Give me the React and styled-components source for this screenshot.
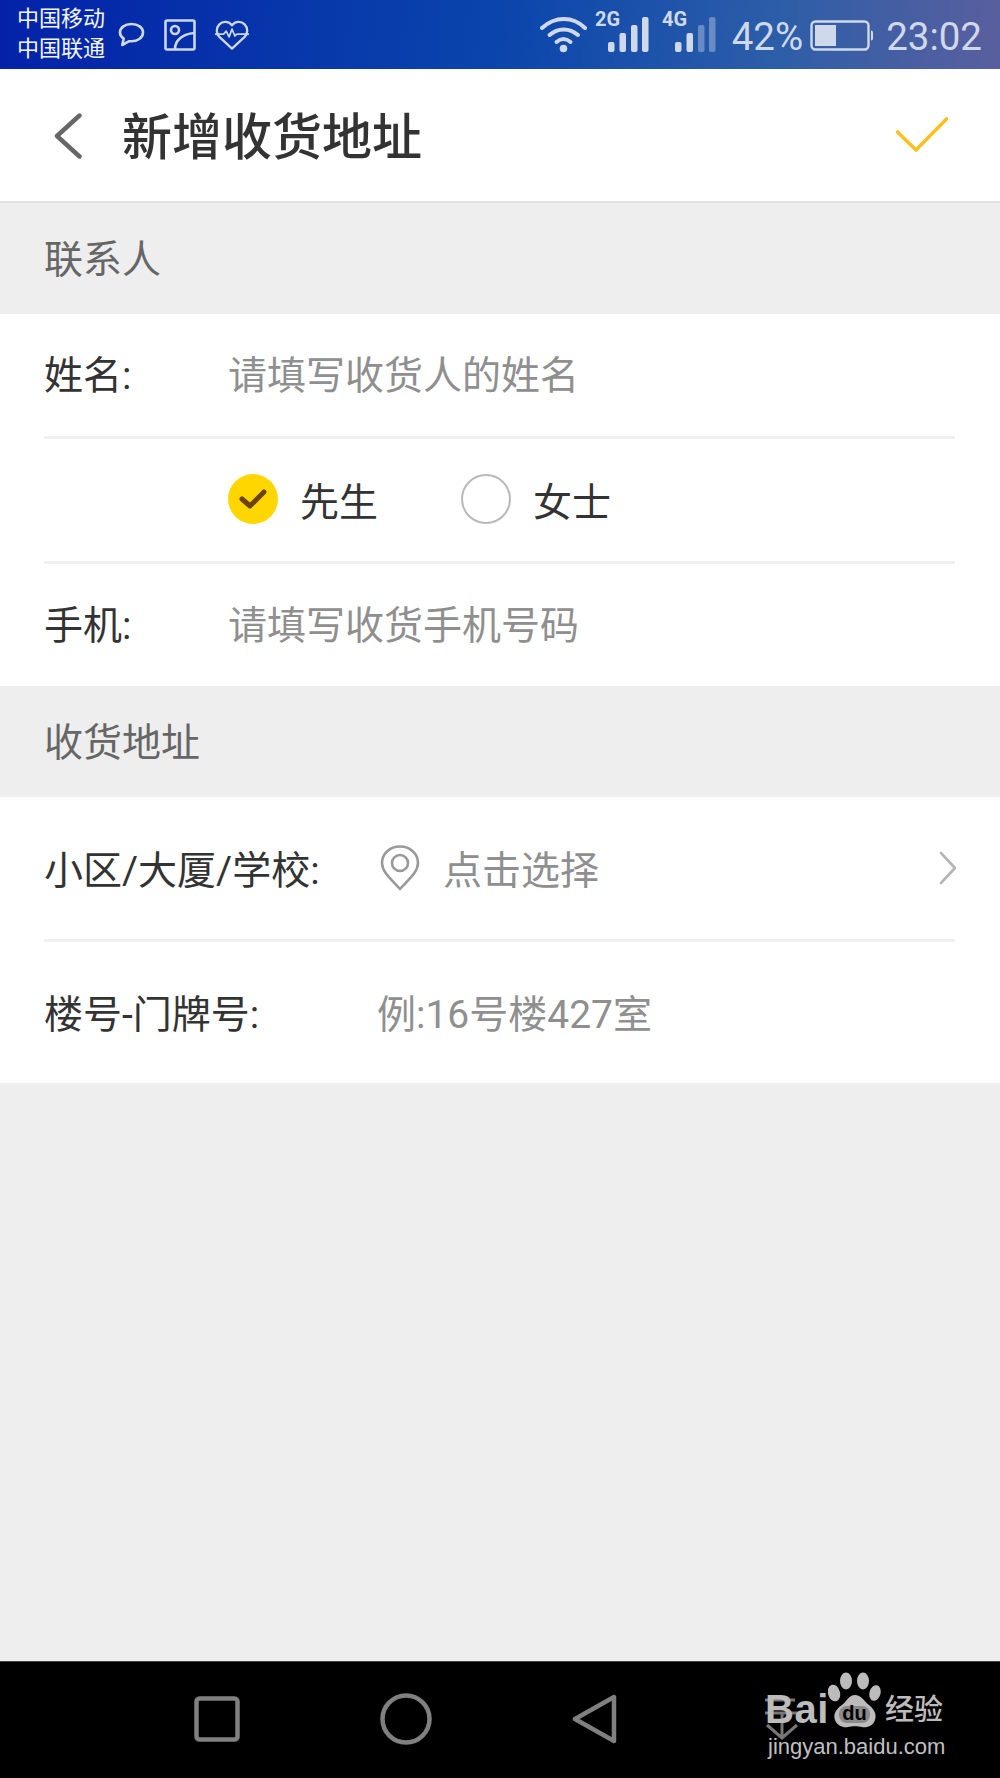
import React from 'react';
import styled, { createGlobalStyle } from 'styled-components';

const GlobalStyle = createGlobalStyle`
  html, body {
    margin: 0;
    padding: 0;
    background: #eeeeee;
  }
  * {
    box-sizing: border-box;
  }
`;

const FONT = 'Roboto, "Noto Sans CJK SC", sans-serif';

const Page = styled.div`
  width: 1000px;
  height: 1778px;
  display: flex;
  flex-direction: column;
  position: relative;
  overflow: hidden;
  font-family: ${FONT};
  background: #eeeeee;
`;

// status bar
const StatusBar = styled.div`
  height: 69px;
  flex: none;
  display: flex;
  align-items: center;
  padding: 0 18px 0 17px;
  background: linear-gradient(95deg, #0322a8 0%, #0a45ac 50%, #2d5ea8 78%, #5a5f9e 100%);
  color: #d0d9ea;
`;

const Carriers = styled.div`
  width: 101px;
  font-size: 22px;
  line-height: 30px;
  color: #f2f5fb;
  margin-top: -2px;
`;

const StatusIcons = styled.div`
  display: flex;
  align-items: center;
  gap: 19px;
  margin-top: 1px;
`;

const StatusRight = styled.div`
  margin-left: auto;
  display: flex;
  align-items: center;
`;

const SignalWrap = styled.div`
  width: ${(p) => p.$width}px;
  height: 69px;
`;

const StatusText = styled.span`
  font-size: 38.5px;
  line-height: 69px;
  margin-top: 4px;
  color: #d0d9ea;
`;

const Battery = styled.svg`
  margin: 2px 12px 0 7px;
`;

// header
const Header = styled.header`
  height: 134px;
  flex: none;
  display: flex;
  align-items: center;
  padding: 0 52px 0 54px;
  background: #ffffff;
  border-bottom: 2px solid #e2e2e2;
`;

const BackIcon = styled.svg`
  margin-top: 2px;
`;

const Title = styled.h1`
  margin: 0 0 4px 40px;
  font-size: 50px;
  font-weight: 500;
  color: #333333;
`;

const Confirm = styled.svg`
  margin-left: auto;
`;

// form
const SectionLabel = styled.div`
  height: 111px;
  flex: none;
  display: flex;
  align-items: center;
  padding: 0 44px 5px;
  font-size: 39px;
  color: #666666;
`;

const Panel = styled.section`
  background: #ffffff;
  padding: 0 45px 0 44px;
  flex: none;
`;

const Row = styled.div`
  height: ${(p) => p.$height}px;
  display: flex;
  align-items: center;
  font-size: 39px;
  border-bottom: ${(p) => (p.$last ? 'none' : '3px solid #f0f0f0')};
`;

const Label = styled.span`
  flex: none;
  width: ${(p) => p.$width}px;
  margin-bottom: ${(p) => p.$lift ?? 7}px;
  color: #333333;
`;

const Placeholder = styled.span`
  margin-bottom: ${(p) => p.$lift ?? 7}px;
  color: #8f8f8f;
`;

const Radio = styled.span`
  width: 50px;
  height: 50px;
  flex: none;
  margin-bottom: 2px;
  border-radius: 50%;
  display: flex;
  align-items: center;
  justify-content: center;
  background: ${(p) => (p.$checked ? '#ffd600' : '#ffffff')};
  border: ${(p) => (p.$checked ? 'none' : '2px solid #b9b9b9')};
`;

const GenderOption = styled.div`
  display: flex;
  align-items: center;
  gap: 22px;
  width: 233px;
  color: #333333;
`;

const GenderText = styled.span`
  margin-bottom: 3px;
`;

const PinIcon = styled.svg`
  flex: none;
  margin-right: 23px;
  margin-left: 3px;
`;

const Chevron = styled.svg`
  margin-left: auto;
  margin-right: -2px;
`;

const Filler = styled.div`
  flex: 1;
`;

// bottom nav
const NavBar = styled.nav`
  height: 117px;
  flex: none;
  background: #000000;
  border-top: 1px solid #444444;
  display: flex;
  align-items: center;
  padding: 0 0 3px 194px;
`;

const NavSlot = styled.div`
  display: flex;
  align-items: center;
  margin-left: ${(p) => p.$gap}px;
`;

// watermark lies over the nav bar
const Watermark = styled.div`
  position: absolute;
  left: 765px;
  top: 1672px;
  width: 182px;
  height: 86px;
  color: #bcbcbc;
  font-family: "Liberation Sans", "Noto Sans CJK SC", sans-serif;
`;

const WatermarkTop = styled.div`
  display: flex;
  align-items: flex-end;
  height: 56px;
`;

const Bai = styled.span`
  width: 63px;
  font-size: 40px;
  font-weight: 700;
  line-height: 38px;
  letter-spacing: 0.5px;
`;

const Jing = styled.span`
  font-size: 29px;
  font-weight: 500;
  line-height: 36px;
  margin-left: 3px;
  white-space: nowrap;
`;

const WatermarkUrl = styled.div`
  font-size: 22px;
  line-height: 24px;
  margin: 7px 0 0 3px;
  white-space: nowrap;
  color: #c0c0c0;
`;

const Bars = ({ x, faded }) => {
  const offsets = [0, 11.5, 23, 34];
  const heights = [10, 19, 27, 35];
  return (
    <>
      {offsets.map((o, i) => (
        <rect
          key={i}
          x={x + o}
          y={52 - heights[i]}
          width="6.5"
          height={heights[i]}
          rx="2"
          fill="#d0d9ea"
          opacity={faded && i > 1 ? 0.4 : 1}
        />
      ))}
    </>
  );
};

function App() {
  return (
    <Page>
      <GlobalStyle />
      <StatusBar>
        <Carriers>
          中国移动
          <br />
          中国联通
        </Carriers>
        <StatusIcons>
          <svg width="27" height="26" viewBox="0 0 27 26" fill="none" stroke="#d0d9ea" strokeWidth="2.6" strokeLinejoin="round">
            <path d="M13.5 2C7 2 2 5.6 2 10.5c0 2.8 1.500 4.800 3.700 6.200L4.200 23l7-3.800c.8.100 1.500.1 2.300.1 6.500 0 11.500-3.800 11.500-8.800S20 2 13.500 2z" />
          </svg>
          <svg width="32" height="32" viewBox="0 0 32 32" fill="none" stroke="#cdd6ea" strokeWidth="2.6">
            <rect x="1.500" y="1.500" width="29" height="29" rx="1.500" />
            <circle cx="11" cy="11" r="4" />
            <path d="M11 30c0-9 8-15 19-16" />
          </svg>
          <svg width="34" height="32" viewBox="0 0 35 32" fill="none" stroke="#cdd6ea" strokeWidth="2.4" strokeLinejoin="round">
            <path d="M17.500 30L4.500 18C1 14.500 1 8.500 4.500 5c3.500-3.500 9.500-3.500 13 1 3.500-4.500 9.500-4.500 13-1 3.500 3.500 3.500 9.500 0 13z" />
            <path d="M0 15h9l2.500-3 3 6 3-8 3 7 2-2h12.500" strokeWidth="1.800" />
          </svg>
        </StatusIcons>
        <StatusRight>
          <SignalWrap $width={192}>
            <svg width="192" height="69" viewBox="0 0 192 69" fill="none">
              <g stroke="#d0d9ea" strokeWidth="4" strokeLinecap="round">
                <path d="M2 28c13-12 31-12 43 0" />
                <path d="M9.500 35c8.500-7.500 20-7.500 28.500 0" />
                <path d="M16.500 42c4.500-3.800 9.500-3.800 14 0" />
              </g>
              <circle cx="23.500" cy="48.500" r="3.800" fill="#d0d9ea" />
              <text x="55" y="26" fontFamily="Roboto, sans-serif" fontSize="20" fontWeight="700" fill="#d0d9ea">2G</text>
              <text x="122" y="26" fontFamily="Roboto, sans-serif" fontSize="20" fontWeight="700" fill="#d0d9ea">4G</text>
              <Bars x={68} />
              <Bars x={135} faded />
            </svg>
          </SignalWrap>
          <StatusText>42%</StatusText>
          <Battery width="64" height="32" viewBox="0 0 64 32" fill="none">
            <rect x="1.500" y="1.500" width="57" height="28" rx="4" stroke="#d0d9ea" strokeWidth="2.400" />
            <rect x="5" y="5" width="21" height="21" fill="#d0d9ea" />
            <path d="M61 10.500c1.500 0 2 1 2 2v6c0 1-.5 2-2 2z" fill="#d0d9ea" />
          </Battery>
          <StatusText>23:02</StatusText>
        </StatusRight>
      </StatusBar>

      <Header>
        <BackIcon width="28" height="46" viewBox="0 0 28 46" fill="none">
          <path d="M25.500 2.500L3 23l22.500 20.500" stroke="#666666" strokeWidth="4.400" strokeLinecap="round" strokeLinejoin="round" />
        </BackIcon>
        <Title>新增收货地址</Title>
        <Confirm width="52" height="36" viewBox="0 0 52 36" fill="none">
          <path d="M1.500 15l18.500 18L50.500 2" stroke="#fdc022" strokeWidth="3.600" strokeLinecap="round" strokeLinejoin="round" />
        </Confirm>
      </Header>

      <SectionLabel>联系人</SectionLabel>
      <Panel>
        <Row $height={125}>
          <Label $width={184}>姓名:</Label>
          <Placeholder>请填写收货人的姓名</Placeholder>
        </Row>
        <Row $height={125}>
          <Label $width={184} $lift={0} />
          <GenderOption>
            <Radio $checked>
              <svg width="28" height="22" viewBox="0 0 28 22" fill="none">
                <path d="M3 11l8 7L25 4" stroke="#6e4200" strokeWidth="5" strokeLinecap="round" strokeLinejoin="round" />
              </svg>
            </Radio>
            <GenderText>先生</GenderText>
          </GenderOption>
          <GenderOption>
            <Radio />
            <GenderText>女士</GenderText>
          </GenderOption>
        </Row>
        <Row $height={122} $last>
          <Label $width={184}>手机:</Label>
          <Placeholder>请填写收货手机号码</Placeholder>
        </Row>
      </Panel>

      <SectionLabel>收货地址</SectionLabel>
      <Panel>
        <Row $height={145}>
          <Label $width={333} $lift={3}>小区/大厦/学校:</Label>
          <PinIcon width="40" height="46" viewBox="0 0 40 46" fill="none" stroke="#999999" strokeWidth="2.600">
            <path d="M20 44C11 34 2 27 2 18 2 8.500 10 1.500 20 1.500S38 8.500 38 18c0 9-9 16-18 26z" strokeLinejoin="round" />
            <circle cx="20" cy="18" r="8" />
          </PinIcon>
          <Placeholder $lift={3}>点击选择</Placeholder>
          <Chevron width="18" height="34" viewBox="0 0 18 34" fill="none">
            <path d="M2 2l14 15L2 32" stroke="#b5b5b5" strokeWidth="2.600" strokeLinecap="round" strokeLinejoin="round" />
          </Chevron>
        </Row>
        <Row $height={141} $last>
          <Label $width={333} $lift={3}>楼号-门牌号:</Label>
          <Placeholder $lift={3}>例:16号楼427室</Placeholder>
        </Row>
      </Panel>

      <Filler />

      <NavBar>
        <svg width="46" height="46" viewBox="0 0 46 46" fill="none">
          <rect x="2.500" y="2.500" width="41" height="41" rx="3" stroke="#808080" strokeWidth="4.500" />
        </svg>
        <NavSlot $gap={140}>
          <svg width="52" height="52" viewBox="0 0 52 52" fill="none">
            <circle cx="26" cy="26" r="23.500" stroke="#808080" strokeWidth="4.500" />
          </svg>
        </NavSlot>
        <NavSlot $gap={140}>
          <svg width="46" height="50" viewBox="0 0 46 50" fill="none">
            <path d="M42 3v44L3 25z" stroke="#808080" strokeWidth="4.500" strokeLinejoin="round" />
          </svg>
        </NavSlot>
        <NavSlot $gap={146}>
          <svg width="36" height="44" viewBox="0 0 36 44" fill="none" stroke="#777777" strokeWidth="3">
            <path d="M1 3h30M1 16h34M18 16v25M3 28l15 13 15-13" />
          </svg>
        </NavSlot>
      </NavBar>

      <Watermark>
        <WatermarkTop>
          <Bai>Bai</Bai>
          <svg width="54" height="56" viewBox="0 0 54 56" fill="#bcbcbc">
            <ellipse cx="6" cy="21" rx="6" ry="8.500" transform="rotate(-15 6 21)" />
            <ellipse cx="18" cy="9" rx="6" ry="8.500" />
            <ellipse cx="35" cy="9" rx="6" ry="8.500" />
            <ellipse cx="47" cy="21" rx="5.500" ry="8" transform="rotate(15 47 21)" />
            <path d="M27 23c-6 0-8 6-13 10-6 4-9 9-7 15 2 6 9 8 13 7 4-1 10-1 14 0 5 1 11-1 13-7 2-6-1-11-6-15-5-4-8-10-14-10z" />
            <rect x="11" y="34" width="31" height="17" rx="8" fill="#8a8a8a" />
            <text x="26.500" y="48" textAnchor="middle" fontSize="20" fontWeight="700" fontFamily="Liberation Sans, sans-serif" fill="#000000">du</text>
          </svg>
          <Jing>经验</Jing>
        </WatermarkTop>
        <WatermarkUrl>jingyan.baidu.com</WatermarkUrl>
      </Watermark>
    </Page>
  );
}

export default App;
